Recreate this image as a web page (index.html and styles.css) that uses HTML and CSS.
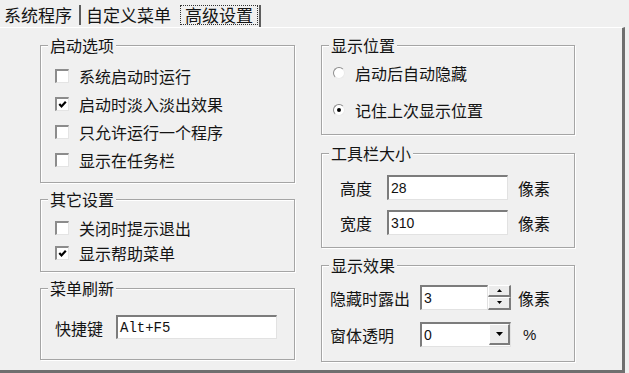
FILE: index.html
```html
<!DOCTYPE html>
<html lang="zh-CN">
<head>
    <meta charset="UTF-8">
    <title>高级设置</title>
    <link rel="stylesheet" href="styles.css">
</head>
<body>
    <div class="window">
        <div class="tabs">
            <div class="tab tab-first">系统程序</div>
            <div class="tab tab-second">自定义菜单</div>
            <div class="tab tab-active"><span class="focus">高级设置</span></div>
        </div>
        <div class="panel">
            <div class="col col-left">
                <div class="group g-startup">
                    <div class="group-title">启动选项</div>
                    <div class="check-row"><span class="cb"></span>系统启动时运行</div>
                    <div class="check-row"><span class="cb"><svg viewBox="0 0 9 9"><polyline points="1.3,4 3.5,6.4 7.8,1.8"/></svg></span>启动时淡入淡出效果</div>
                    <div class="check-row"><span class="cb"></span>只允许运行一个程序</div>
                    <div class="check-row"><span class="cb"></span>显示在任务栏</div>
                </div>
                <div class="group g-other">
                    <div class="group-title">其它设置</div>
                    <div class="check-row"><span class="cb"></span>关闭时提示退出</div>
                    <div class="check-row"><span class="cb"><svg viewBox="0 0 9 9"><polyline points="1.3,4 3.5,6.4 7.8,1.8"/></svg></span>显示帮助菜单</div>
                </div>
                <div class="group g-refresh">
                    <div class="group-title">菜单刷新</div>
                    <div class="field-row">
                        <span class="label label-hotkey">快捷键</span>
                        <span class="field field-mono field-hotkey">Alt+F5</span>
                    </div>
                </div>
            </div>
            <div class="col col-right">
                <div class="group g-position">
                    <div class="group-title">显示位置</div>
                    <div class="radio-row"><span class="radio"></span>启动后自动隐藏</div>
                    <div class="radio-row"><span class="radio checked"></span>记住上次显示位置</div>
                </div>
                <div class="group g-size">
                    <div class="group-title">工具栏大小</div>
                    <div class="field-row">
                        <span class="label label-size">高度</span>
                        <span class="field field-size">28</span>
                        <span class="unit">像素</span>
                    </div>
                    <div class="field-row">
                        <span class="label label-size">宽度</span>
                        <span class="field field-size">310</span>
                        <span class="unit">像素</span>
                    </div>
                </div>
                <div class="group g-effect">
                    <div class="group-title">显示效果</div>
                    <div class="field-row">
                        <span class="label label-effect">隐藏时露出</span>
                        <span class="field field-spin">3</span>
                        <span class="spinner">
                            <span class="spin-btn"><svg viewBox="0 0 5 3"><polygon points="2.5,0 5,3 0,3"/></svg></span>
                            <span class="spin-btn"><svg viewBox="0 0 5 3"><polygon points="0,0 5,0 2.5,3"/></svg></span>
                        </span>
                        <span class="unit unit-spin">像素</span>
                    </div>
                    <div class="field-row">
                        <span class="label label-effect">窗体透明</span>
                        <span class="field field-combo">0<span class="drop-btn"><svg viewBox="0 0 7 4"><polygon points="0,0 7,0 3.5,4"/></svg></span></span>
                        <span class="percent">%</span>
                    </div>
                </div>
            </div>
        </div>
    </div>
</body>
</html>
```

FILE: styles.css
```css
body {
    margin: 0;
    background-color: #f0f0f0;
    font-family: "Noto Sans CJK SC", "Liberation Sans", sans-serif;
    font-size: 16px;
    color: #141414;
}
.window {
    width: 629px;
    height: 373px;
    overflow: hidden;
}

/* tab strip */
.tabs {
    display: flex;
    height: 27px;
}
.tab {
    font-size: 17px;
    line-height: 20px;
    margin-top: 5px;
}
.tab-first {
    padding: 0 7px 0 4px;
    margin-bottom: 2px;
    border-right: 2px solid #5e5e5e;
}
.tab-second {
    padding: 0 9px 0 5px;
}
.tab-active {
    padding-right: 1px;
    border-right: 2px solid #5e5e5e;
}
.focus {
    display: block;
    padding: 0 5px;
    outline: 1px dotted #333;
    outline-offset: -1px;
}

/* page body */
.panel {
    display: flex;
    gap: 26px;
    height: 346px;
    box-sizing: border-box;
    padding: 17px 0 0 40px;
    width: 625px;
    border-top: 1px solid #fff;
    border-right: 3px solid #6f6f6f;
    border-bottom: 3px solid #6f6f6f;
}
.col {
    display: flex;
    flex-direction: column;
}
.col-left {
    width: 255px;
}
.col-right {
    width: 254px;
}

/* etched group box */
.group {
    border: 1px solid #a5a5a5;
    box-shadow: inset 1px 1px 0 #fff, 1px 1px 0 #fff;
}
.group-title {
    display: table;
    margin: -10px 0 0 7px;
    padding: 0 2px;
    line-height: 18px;
    background-color: #f0f0f0;
}
.g-startup {
    padding: 0 0 8px 14px;
}
.g-startup .group-title {
    margin-bottom: 8px;
    margin-left: -7px;
}
.g-other {
    margin-top: 16px;
    padding: 0 0 6px 14px;
}
.g-other .group-title {
    margin-bottom: 7px;
    margin-left: -7px;
}
.g-refresh {
    margin-top: 16px;
    padding: 0 0 19px 14px;
}
.g-refresh .group-title {
    margin-bottom: 17px;
    margin-left: -7px;
}
.g-position {
    padding: 0 0 12px 11px;
}
.g-position .group-title {
    margin-bottom: 7px;
    margin-left: -4px;
}
.g-size {
    margin-top: 18px;
    padding: 0 0 12px 18px;
}
.g-size .group-title {
    margin-bottom: 12px;
    margin-left: -11px;
}
.g-effect {
    margin-top: 17px;
    padding: 0 0 14px 8px;
}
.g-effect .group-title {
    margin-bottom: 10px;
    margin-left: -1px;
}

/* checkboxes */
.check-row {
    display: flex;
    align-items: center;
    gap: 10px;
    height: 28px;
}
.g-other .check-row {
    height: 25px;
}
.cb {
    width: 14px;
    height: 14px;
    box-sizing: border-box;
    background-color: #fff;
    border-style: solid;
    border-width: 2px 1px 1px 2px;
    border-color: #8c8c8c #e4e4e4 #e4e4e4 #8c8c8c;
    display: flex;
    align-items: center;
    justify-content: center;
}
.cb svg {
    width: 9px;
    height: 9px;
    fill: none;
    stroke: #000;
    stroke-width: 2.2;
}

/* radios */
.radio-row {
    display: flex;
    align-items: center;
    gap: 10px;
    height: 24px;
}
.radio-row + .radio-row {
    margin-top: 13px;
}
.radio {
    width: 12px;
    height: 12px;
    box-sizing: border-box;
    border-radius: 50%;
    background-color: #fff;
    border: 1px solid;
    border-color: #8c8c8c #eaeaea #eaeaea #8c8c8c;
    display: flex;
    align-items: center;
    justify-content: center;
}
.radio.checked::after {
    content: "";
    width: 4px;
    height: 4px;
    border-radius: 50%;
    background-color: #000;
}

/* text fields */
.field-row {
    display: flex;
    align-items: center;
}
.g-size .field-row + .field-row {
    margin-top: 9px;
}
.g-effect .field-row + .field-row {
    margin-top: 11px;
}
.label {
    padding-top: 2px;
}
.label-hotkey {
    width: 61px;
}
.label-size {
    width: 47px;
}
.label-effect {
    width: 90px;
}
.field {
    position: relative;
    display: flex;
    align-items: center;
    height: 25px;
    box-sizing: border-box;
    padding-left: 2px;
    background-color: #fff;
    border-style: solid;
    border-width: 2px 1px 1px 2px;
    border-color: #7c7c7c #e2e2e2 #e2e2e2 #7c7c7c;
    font-family: "Liberation Sans", sans-serif;
    font-size: 14px;
    color: #111;
}
.field-mono {
    font-family: "Liberation Mono", monospace;
}
.field-hotkey {
    width: 161px;
    height: 24px;
}
.field-size {
    width: 121px;
}
.field-spin {
    width: 68px;
}
.field-combo {
    width: 91px;
}
.unit {
    margin-left: 10px;
    padding-top: 2px;
}
.unit-spin {
    margin-left: 7px;
}
.percent {
    margin-left: 12px;
    font-family: "Liberation Sans", sans-serif;
    font-size: 15px;
    padding-top: 1px;
}

/* spinner and dropdown buttons */
.spinner {
    display: flex;
    flex-direction: column;
    width: 23px;
    height: 25px;
}
.spin-btn,
.drop-btn {
    display: flex;
    align-items: center;
    justify-content: center;
    box-sizing: border-box;
    background-color: #ececec;
    border-style: solid;
    border-width: 1px 2px 2px 1px;
    border-color: #fff #7c7c7c #7c7c7c #fff;
}
.spin-btn {
    height: 12.5px;
}
.spin-btn svg {
    width: 5px;
    height: 3px;
    fill: #000;
}
.drop-btn {
    position: absolute;
    top: 0;
    right: 0;
    width: 21px;
    height: 21px;
    margin: 0;
}
.drop-btn svg {
    width: 7px;
    height: 4px;
    fill: #000;
}
```
